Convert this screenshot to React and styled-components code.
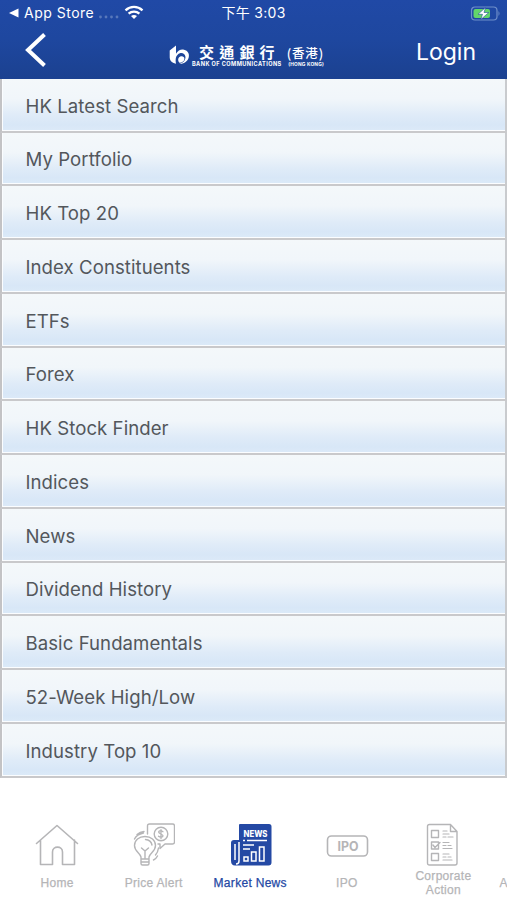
import React from "react";
import styled, { createGlobalStyle } from "styled-components";

const GlobalStyle = createGlobalStyle`
  * { box-sizing: border-box; }
  body { margin: 0; background: #fff; }
`;

const Screen = styled.div`
  width: 507px;
  height: 900px;
  overflow: hidden;
  display: flex;
  flex-direction: column;
  background: #fff;
  font-family: Inter, "Noto Sans CJK TC", sans-serif;
`;

const Header = styled.header`
  flex: none;
  height: 79px;
  color: #fff;
  background: linear-gradient(#2049a6, #1e479f 50%, #1b4190);
`;

const StatusBar = styled.div`
  display: grid;
  grid-template-columns: 1fr auto 1fr;
  align-items: center;
  height: 26px;
  padding: 0 6px 0 9px;
`;

const StatusLeft = styled.div`
  display: flex;
  align-items: center;
  margin-top: -1px;
  font-size: 14px;
  letter-spacing: 0.5px;
  white-space: nowrap;
  svg { display: block; flex: none; }
`;

const AppName = styled.span`
  margin: 0 5px 0 5px;
`;

const WifiSlot = styled.span`
  margin-left: 5px;
`;

const Clock = styled.div`
  margin: -2px 0 0 -3px;
  font-size: 14px;
  letter-spacing: 0.3px;
  white-space: nowrap;
`;

const StatusRight = styled.div`
  display: flex;
  justify-content: flex-end;
`;

const NavBar = styled.nav`
  display: flex;
  align-items: center;
  height: 53px;
  padding: 0 31px 0 24px;
`;

const IconButton = styled.button`
  display: flex;
  width: 24px;
  padding: 0;
  margin-top: -6px;
  border: 0;
  background: none;
`;

const Brand = styled.div`
  display: flex;
  align-items: center;
  width: 158px;
  margin: 6px auto 0 121px;
`;

const BrandText = styled.div`
  margin: -1px 0 0 2px;
  white-space: nowrap;
`;

const BrandChinese = styled.div`
  display: flex;
  align-items: center;
  height: 15px;
  padding-left: 7px;
  font: 600 15px/15px "Noto Sans CJK TC", sans-serif;
  letter-spacing: 5.2px;
`;

const BrandRegion = styled.span`
  display: flex;
  align-items: center;
  margin: 2px 0 0 7px;
  font-size: 12.5px;
  font-weight: 500;
  letter-spacing: 0.8px;
`;

const BrandEnglish = styled.div`
  display: flex;
  justify-content: space-between;
  align-items: center;
  width: 132px;
  height: 5px;
  margin-top: 3px;
  font: 700 5.6px/5px Inter, sans-serif;
  letter-spacing: 0.42px;
`;

const RegionEnglish = styled.span`
  font-size: 4.8px;
  letter-spacing: 0.2px;
`;

const Login = styled.button`
  padding: 0;
  margin-top: -1px;
  border: 0;
  background: none;
  color: #fff;
  font: 400 23px/30px Inter, sans-serif;
`;

const Menu = styled.ul`
  flex: none;
  margin: 0;
  padding: 0;
  list-style: none;
  display: grid;
  grid-template-rows: 53.6px repeat(12, 53.75px);
`;

const MenuItem = styled.li`
  display: flex;
  align-items: center;
  padding: 2px 0 0 23.500px;
  border-left: 2px solid #c3c3c5;
  border-right: 2px solid #c9cbce;
  border-bottom: 2px solid #c9c9cb;
  box-shadow: inset 1px -1px 0 #fbfdff;
  background: linear-gradient(#f4f8fa, #f1f6fa 38%, #dfebf8 70%, #d8e7f7 88%, #dceaf8);
  color: #53575c;
  font-size: 18.6px;
  letter-spacing: 0.06px;
  white-space: nowrap;
`;

const TabBar = styled.nav`
  display: flex;
  flex: 1;
  margin-top: 44px;
  padding-left: 8.5px;
`;

const Tab = styled.div`
  flex: none;
  width: 96.6px;
  display: flex;
  flex-direction: column;
  align-items: center;
  color: ${({ $active }) => ($active ? "#2449a4" : "#b5b5b7")};
  svg { display: block; }
`;

const TabLabel = styled.div`
  display: flex;
  align-items: center;
  height: 28px;
  margin: 2px 0 0 0.5px;
  text-align: center;
  white-space: pre-line;
  font: 400 12px/13.5px "Liberation Sans", sans-serif;
  letter-spacing: 0.3px;
  -webkit-text-stroke: 0.25px currentColor;
`;

const NextTab = styled(TabLabel)`
  align-self: flex-start;
  margin: 48px 0 0 8px;
`;

const rows = [
  "HK Latest Search", "My Portfolio", "HK Top 20", "Index Constituents",
  "ETFs", "Forex", "HK Stock Finder", "Indices", "News",
  "Dividend History", "Basic Fundamentals", "52-Week High/Low", "Industry Top 10",
];

const line = { fill: "none", stroke: "currentColor", strokeWidth: 1.6, strokeLinejoin: "round", strokeLinecap: "round" };

const WifiIcon = () => (
  <svg width="20" height="15" viewBox="0 0 20 15" fill="none" stroke="#fff" strokeWidth="2.3">
    <path d="M1.5 5.3C6.5.7 13.500.7 18.500 5.300M4.600 8.700C7.700 5.900 12.300 5.900 15.400 8.700" />
    <path d="M10 14 7 11.100Q10 8.900 13 11.100Z" fill="#fff" stroke="none" />
  </svg>
);

const BatteryIcon = () => (
  <svg width="31" height="15" viewBox="0 0 31 15">
    <rect x="1.500" y="1" width="25.500" height="13" rx="3.500" fill="none" stroke="#6f8fca" strokeWidth="1.200" />
    <path d="M28.500 5q2 2.500 0 5Z" fill="#6f8fca" />
    <rect x="3.500" y="3" width="16.500" height="9" rx="2" fill="#62d66a" />
    <path d="M15.500 1.500 8 8.300h4.500L10.800 13.500l8-7h-4.800Z" fill="#fff" stroke="#24509a" strokeWidth=".6" />
  </svg>
);

const BankLogo = () => (
  <svg width="21" height="21" viewBox="0 0 21 21" fill="#fff">
    <path d="M.7 5.500 7 .5V8.800C9 5.300 12.200 3.800 15 4.700c4 .9 5.700 4.300 4.700 7.700-1.100 4-4.800 6.500-9.400 6.500 4.200-1.100 6.600-4.500 6.100-7.500-.4-2.500-3-4.100-5.500-3.200C7.300 9.500 6 13 7 18.800 2.500 17.700.5 15.300.7 11.500Z" />
    <path d="M11.300 11.500c2.200-.8 4.300.4 4.100 2.500-.2 2-2 3.600-4.900 3.800-1.800-1.800-1.900-5.100.8-6.300Z" />
  </svg>
);

const HomeIcon = () => (
  <svg width="44" height="46" viewBox="0 0 44 46" {...line}>
    <path d="m1.500 21.500 20.500-18 20.500 18M5.500 18v24.500h12V30c0-6.500 10-6.500 10 0v12.500h12V18" />
  </svg>
);

const AlertIcon = () => (
  <svg width="44" height="46" viewBox="0 0 44 46" {...line} strokeWidth="1.400">
    <path d="M10 37v-2c-1-4-6.500-5.500-6.500-11.500C3.500 18 8 14.500 14 14.500S24.500 18 24.500 23.500c0 6-5.500 7.500-6.500 11.500v2ZM10 37v4.500q0 1.500 1.500 1.500h5q1.500 0 1.500-1.500V37M10 40h8M14 36v-7l-3.500-3m3.500 3 3.500-3M14.500 17.500q5.500.5 6.500 5.500" />
    <path d="M3.500 17Q5.500 12.500 12.500 11M6 12.500q3-2.500 7-3M24.500 33q2.500-3 3-7M22.500 38q2.500-1 4-4" />
    <path d="M16.500 12V4q0-2 2-2h23q2 0 2 2v16q0 2-2 2H34l-5 4.500V22h-2" />
    <circle cx="30" cy="12" r="6.800" />
    <path d="M32 9.700q-2.500-1.700-4-.5c-1.800 2 4 3 4 4.500 0 1.800-3 1.800-4.500.5M30 7.700v9" strokeWidth="1.300" />
  </svg>
);

const NewsIcon = () => (
  <svg width="44" height="46" viewBox="0 0 44 46">
    <path d="M12 2h29q2.500 0 2.500 2.500v36q0 3-3 3H7q-4 0-4-5V21q0-3 3-3h5V3q0-1 1-1Z" fill="currentColor" />
    <text x="15.500" y="14.500" fill="#fff" fontFamily="Inter, sans-serif" fontSize="9.500" fontWeight="800" textLength="24" lengthAdjust="spacingAndGlyphs">NEWS</text>
    <g fill="none" stroke="#fff" strokeWidth="1.500">
      <path d="M15 18.500h2M19 18.500h20M15 23h11M15 27h7M7 22v16M11 20v19q0 3-3 3" />
      <path d="M16 35h4v4h-4ZM23.500 30h4.500v9h-4.500ZM31.500 25h4.500v14h-4.500Z" />
    </g>
  </svg>
);

const IpoIcon = () => (
  <svg width="44" height="46" viewBox="0 0 44 46">
    <rect x="2.500" y="14" width="40" height="20" rx="4" {...line} />
    <text x="12.500" y="28.500" fill="currentColor" fontFamily="Inter, sans-serif" fontSize="12.500" fontWeight="700" textLength="21" lengthAdjust="spacingAndGlyphs">IPO</text>
  </svg>
);

const ActionIcon = () => (
  <svg width="44" height="46" viewBox="0 0 44 46" {...line} strokeWidth="1.400">
    <path d="M8 2.500h16l6.500 7V41q0 2-2 2H3q-2 0-2-2V4.500q0-2 2-2ZM24 2.500V9.500h6.500" transform="translate(5.500)" />
    <path d="M10.500 8.500h7v7h-7ZM10.500 20h7v7h-7ZM10.500 31.500h7v7h-7ZM12 23l2 2.500 5-5" />
    <path d="M22 9h4M22 12h6M22 15h3M27 15h5M22 20.500h6M22 23.500h3M27 23.500h3M22 26.500h9M22 32h6M22 35h3M27 35h3M22 38h9" strokeWidth="1.200" />
  </svg>
);

const tabs = [
  { label: "Home", Icon: HomeIcon },
  { label: "Price Alert", Icon: AlertIcon },
  { label: "Market News", Icon: NewsIcon, active: true },
  { label: "IPO", Icon: IpoIcon },
  { label: "Corporate\nAction", Icon: ActionIcon },
];

export default function App() {
  return (
    <Screen>
      <GlobalStyle />
      <Header>
        <StatusBar>
          <StatusLeft>
            <svg width="10" height="10" viewBox="0 0 10 10"><path d="M0 5 9.500.5v9Z" fill="#fff" /></svg>
            <AppName>App Store</AppName>
            <svg width="20" height="15" viewBox="0 0 20 15" fill="#5878bb">
              <circle cx="1.500" cy="12" r="1.400" /><circle cx="7" cy="12" r="1.400" />
              <circle cx="12.500" cy="12" r="1.400" /><circle cx="18" cy="12" r="1.400" />
            </svg>
            <WifiSlot><WifiIcon /></WifiSlot>
          </StatusLeft>
          <Clock>下午 3:03</Clock>
          <StatusRight><BatteryIcon /></StatusRight>
        </StatusBar>
        <NavBar>
          <IconButton aria-label="Back">
            <svg width="24" height="36" viewBox="0 0 24 36"><path d="M20.500 2.500 4 18l16.500 15.500" fill="none" stroke="#fff" strokeWidth="4" /></svg>
          </IconButton>
          <Brand>
            <BankLogo />
            <BrandText>
              <BrandChinese>交通銀行<BrandRegion>(香港)</BrandRegion></BrandChinese>
              <BrandEnglish><span>BANK OF COMMUNICATIONS</span><RegionEnglish>(HONG KONG)</RegionEnglish></BrandEnglish>
            </BrandText>
          </Brand>
          <Login>Login</Login>
        </NavBar>
      </Header>
      <Menu>
        {rows.map((label) => <MenuItem key={label}>{label}</MenuItem>)}
      </Menu>
      <TabBar>
        {tabs.map(({ label, Icon, active }) => (
          <Tab key={label} $active={active}>
            <Icon />
            <TabLabel>{label}</TabLabel>
          </Tab>
        ))}
        <Tab><NextTab>A</NextTab></Tab>
      </TabBar>
    </Screen>
  );
}
